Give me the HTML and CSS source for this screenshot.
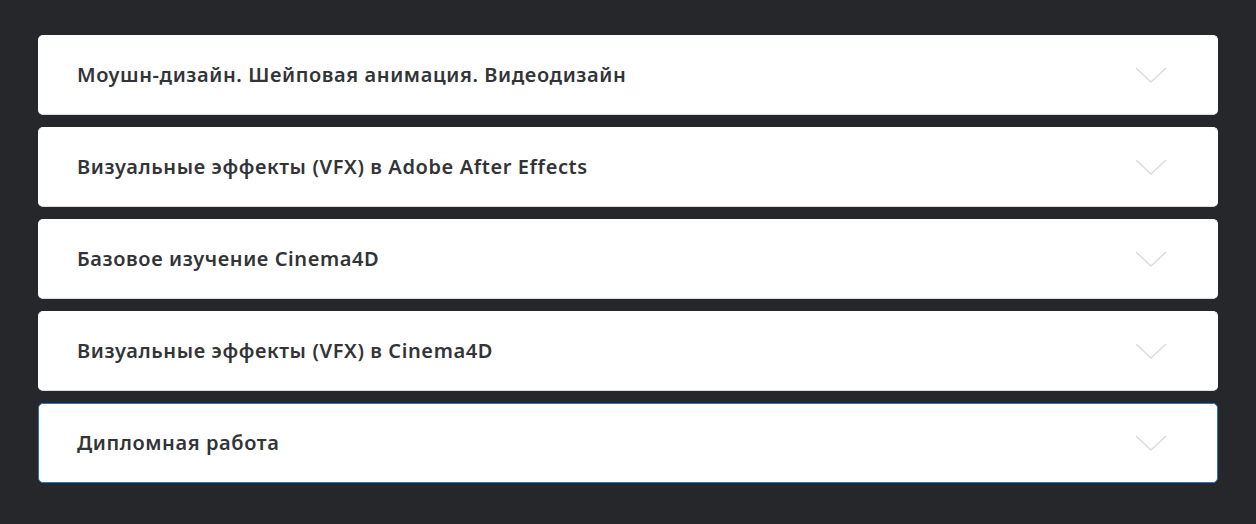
FILE: index.html
```html
<!DOCTYPE html>
<html lang="ru">
<head>
<meta charset="utf-8">
<link rel="stylesheet" href="styles.css">
</head>
<body>
<div class="list">
  <div class="item"><span class="title">Моушн-дизайн. Шейповая анимация. Видеодизайн</span><svg class="chev" viewBox="0 0 32 16"><path d="M1 1 L16 15 L31 1"/></svg></div>
  <div class="item"><span class="title">Визуальные эффекты (VFX) в Adobe After Effects</span><svg class="chev" viewBox="0 0 32 16"><path d="M1 1 L16 15 L31 1"/></svg></div>
  <div class="item"><span class="title">Базовое изучение Cinema4D</span><svg class="chev" viewBox="0 0 32 16"><path d="M1 1 L16 15 L31 1"/></svg></div>
  <div class="item"><span class="title">Визуальные эффекты (VFX) в Cinema4D</span><svg class="chev" viewBox="0 0 32 16"><path d="M1 1 L16 15 L31 1"/></svg></div>
  <div class="item active"><span class="title">Дипломная работа</span><svg class="chev" viewBox="0 0 32 16"><path d="M1 1 L16 15 L31 1"/></svg></div>
</div>
</body>
</html>
```
FILE: styles.css
```css
html, body {
  margin: 0;
  padding: 0;
  background: #26272b;
}
body {
  font-family: "Noto Sans", "Open Sans", sans-serif;
}
.list {
  display: flex;
  flex-direction: column;
  gap: 12px;
  padding: 35px 38px 41px 38px;
}
.item {
  box-sizing: border-box;
  height: 80px;
  background: #ffffff;
  border-radius: 5px;
  border: 1px solid #ffffff;
  border-bottom-color: #dcdcdc;
  display: flex;
  align-items: center;
  justify-content: space-between;
  padding: 0 50px 2px 38px;
}
.item.active {
  border-color: #2a74c4;
}
.title {
  font-size: 20px;
  font-weight: 600;
  color: #333438;
  letter-spacing: 0.6px;
}
.chev {
  width: 32px;
  height: 16px;
  fill: none;
  stroke: #dcdcdc;
  stroke-width: 1.5;
  margin-top: 2px;
}
```
